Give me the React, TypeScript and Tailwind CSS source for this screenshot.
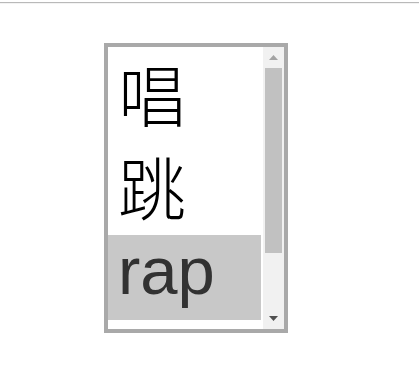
import React from "react";

export default function App() {
  return (
    <div className="w-[419px] h-[383px] bg-white">
      <div className="pt-[2px]">
        <div className="h-px bg-[#b9b9b9]" />
        <div className="h-px bg-[#f3f3f3]" />
      </div>
      <div className="pl-[104px] pt-[39px]">
        <div className="w-[184px] h-[290px] border-4 border-[#a9a9a9] flex bg-white">
          <div className="w-[155px] flex flex-col">
            <div
              className="h-[94px] flex items-center pl-[10px] pb-[2px] text-[68px] leading-none font-light text-black"
              style={{ fontFamily: '"Noto Sans CJK SC", sans-serif' }}
            >
              唱
            </div>
            <div
              className="h-[94px] flex items-center pl-[10px] pb-[4px] text-[68px] leading-none font-light text-black"
              style={{ fontFamily: '"Noto Sans CJK SC", sans-serif' }}
            >
              跳
            </div>
            <div className="h-[85px] mr-[2px] bg-[#c8c8c8] pl-[10px] text-[67px] leading-[72px] text-[#323232] font-['Liberation_Sans',sans-serif]">
              rap
            </div>
          </div>
          <div className="w-[21px] bg-[#f1f1f1] flex flex-col">
            <div className="h-[21px] flex items-center justify-center">
              <svg width="9" height="5" viewBox="0 0 9 5">
                <polygon points="4.5,0 9,5 0,5" fill="#a3a3a3" />
              </svg>
            </div>
            <div className="h-[185px] mx-[2px] bg-[#c1c1c1]" />
            <div className="flex-1" />
            <div className="h-[21px] flex items-center justify-center">
              <svg width="9" height="5" viewBox="0 0 9 5">
                <polygon points="0,0 9,0 4.5,5" fill="#505050" />
              </svg>
            </div>
          </div>
        </div>
      </div>
    </div>
  );
}
